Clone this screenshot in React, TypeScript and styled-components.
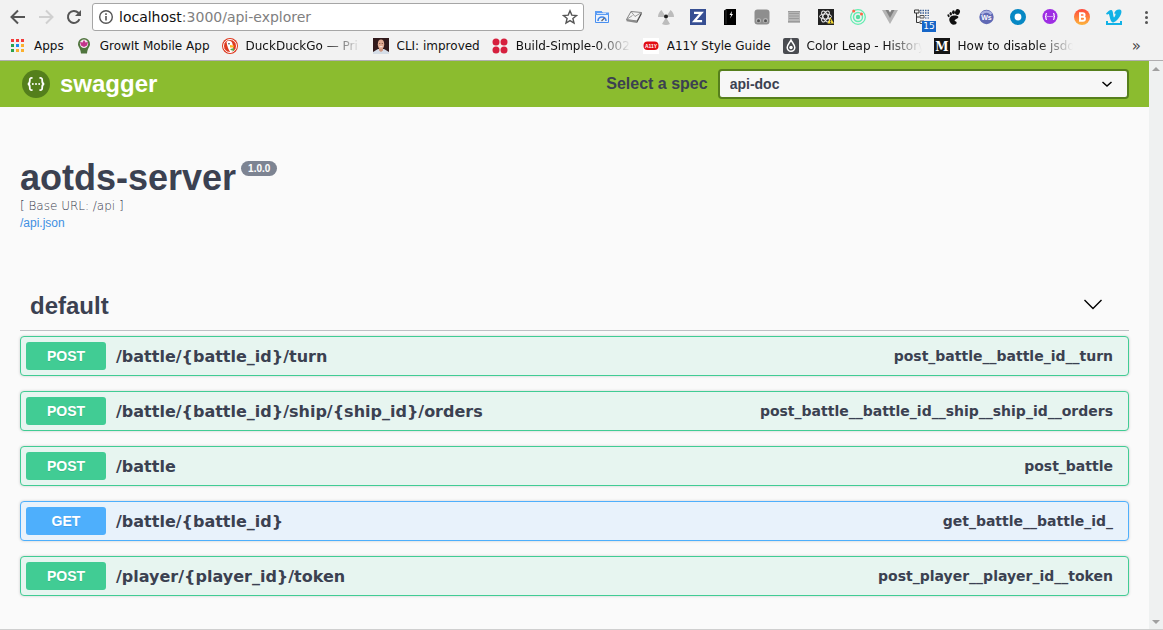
import React from 'react';
import styled, { createGlobalStyle } from 'styled-components';

const UI_FONT = '"DejaVu Sans", Verdana, sans-serif';
const HEAD_FONT = '"Liberation Sans", Arial, sans-serif';
const INK = '#3b4151';

const GlobalStyle = createGlobalStyle`
  *, *::before, *::after { box-sizing: border-box; }
  body { margin: 0; background: #fafafa; color: ${INK}; font-family: ${HEAD_FONT}; }
  button, select, input { font: inherit; color: inherit; }
  svg { display: block; flex: none; }
`;

const Shell = styled.div`
  display: flex;
  flex-direction: column;
  min-height: 100vh;
`;

/* Browser chrome */

const Chrome = styled.header`
  background: #f2f2f2;
  border-bottom: 1px solid #b0aeb0;
  font-family: ${UI_FONT};
  color: #111;
`;

const Toolbar = styled.div`
  display: flex;
  align-items: center;
  height: 34px;
  padding: 0 1px 0 4px;
`;

const NavButtons = styled.nav`
  display: flex;
  margin-right: 4px;
`;

const IconButton = styled.button<{ $width: number }>`
  position: relative;
  display: flex;
  align-items: center;
  justify-content: center;
  width: ${(p) => p.$width}px;
  height: 28px;
  padding: 0;
  border: 0;
  background: none;
`;

const Omnibox = styled.div`
  position: relative;
  display: flex;
  flex: 1;
  align-items: center;
  gap: 5px;
  min-width: 0;
  height: 28px;
  margin-right: 2px;
  padding: 0 5px;
  border: 1px solid #a6a6a6;
  border-radius: 3px;
  background: #fff;
`;

const Address = styled.a`
  flex: 1;
  overflow: hidden;
  color: #808080;
  font-size: 14px;
  line-height: 20px;
  text-decoration: none;
  white-space: nowrap;
`;

const Host = styled.span`
  color: #111;
`;

const Badge = styled.span`
  position: absolute;
  right: 2px;
  bottom: -1px;
  width: 14px;
  height: 11px;
  background: #1666c8;
  color: #fff;
  font-size: 9px;
  line-height: 11px;
  text-align: center;
`;

const Bookmarks = styled.nav`
  display: flex;
  align-items: center;
  gap: 12px;
  height: 26px;
  padding: 0 22px 2px 10px;
`;

const Bookmark = styled.a`
  display: flex;
  align-items: center;
  gap: 8px;
  color: inherit;
  font-size: 12px;
  line-height: 16px;
  text-decoration: none;
  white-space: nowrap;
`;

const BookmarkName = styled.span<{ $fade?: boolean }>`
  overflow: hidden;
  ${(p) =>
    p.$fade &&
    'width: 115px; -webkit-mask-image: linear-gradient(to right, #000 80px, transparent 115px); mask-image: linear-gradient(to right, #000 80px, transparent 115px);'}
`;

const Overflow = styled.button`
  margin-left: auto;
  padding: 0;
  border: 0;
  background: none;
  color: #444;
  font-size: 15px;
  line-height: 16px;
`;

/* Page */

const Viewport = styled.div`
  display: flex;
  flex: 1;
  border-bottom: 1px solid #cfcfcf;
`;

const Page = styled.div`
  flex: 1;
  min-width: 0;
`;

const Scrollbar = styled.div`
  display: flex;
  flex-direction: column;
  align-items: center;
  justify-content: space-between;
  width: 14px;
  padding: 6px 0 5px;
  background: #eff1f1;
`;

const TopBar = styled.div`
  display: flex;
  align-items: center;
  justify-content: space-between;
  height: 46px;
  padding: 0 20px;
  background: #8bbc2f;
`;

const Brand = styled.a`
  display: flex;
  align-items: center;
  gap: 10px;
  color: #fff;
  font-size: 24px;
  font-weight: 700;
  line-height: 28px;
  text-decoration: none;
`;

const SpecLabel = styled.label`
  position: relative;
  display: flex;
  flex: 0 1 600px;
  align-items: center;
`;

const SpecText = styled.span`
  flex: 1;
  padding-right: 10px;
  font-size: 16px;
  font-weight: 700;
  line-height: 20px;
  text-align: right;
  white-space: nowrap;
`;

const SpecSelect = styled.select`
  flex: 2;
  height: 30px;
  padding: 0 40px 0 10px;
  border: 2px solid #567f1c;
  border-radius: 4px;
  background: #f7f7f7;
  font-size: 14px;
  font-weight: 700;
  appearance: none;
`;

const SelectArrow = styled.svg`
  position: absolute;
  right: 12px;
  pointer-events: none;
`;

const Content = styled.main`
  padding: 50px 20px 33px;
`;

const TitleRow = styled.div`
  display: flex;
  align-items: flex-start;
  gap: 5px;
`;

const Title = styled.h1`
  margin: 0;
  font-size: 36px;
  line-height: 42px;
`;

const Version = styled.span`
  margin-top: 4px;
  padding: 0 7px;
  border-radius: 8px;
  background: #7d8492;
  color: #fff;
  font-size: 10px;
  font-weight: 700;
  line-height: 15px;
`;

const BaseUrl = styled.div`
  color: ${INK};
  font-family: "DejaVu Sans Light", ${UI_FONT};
  font-size: 12px;
  font-weight: 300;
  line-height: 15px;
`;

const SpecLink = styled.a`
  display: block;
  width: max-content;
  margin: 2px 0 50px;
  color: #3f8fe2;
  font-size: 12px;
  line-height: 14px;
  text-decoration: none;
`;

const SectionHead = styled.h2`
  display: flex;
  align-items: center;
  justify-content: space-between;
  height: 51px;
  margin: 0 0 5px;
  padding: 2px 20px 0 10px;
  border-bottom: 1px solid #bfc0c4;
  font-size: 24px;
`;

const Operations = styled.ul`
  display: flex;
  flex-direction: column;
  gap: 15px;
  margin: 0;
  padding: 0;
  list-style: none;
`;

type Verb = 'POST' | 'GET';
const verbColor: Record<Verb, string> = { POST: '#41cc94', GET: '#4eaffc' };
const verbFill: Record<Verb, string> = { POST: '#e7f5f0', GET: '#e8f2fb' };

const Operation = styled.button<{ $verb: Verb }>`
  display: flex;
  align-items: center;
  width: 100%;
  height: 40px;
  padding: 0 15px 0 5px;
  border: 1px solid ${(p) => verbColor[p.$verb]};
  border-radius: 4px;
  background: ${(p) => verbFill[p.$verb]};
  box-shadow: 0 0 3px rgba(0, 0, 0, 0.19);
  font-family: ${UI_FONT};
  font-weight: 700;
`;

const Method = styled.span<{ $verb: Verb }>`
  width: 80px;
  border-radius: 3px;
  background: ${(p) => verbColor[p.$verb]};
  color: #fff;
  font-family: ${HEAD_FONT};
  font-size: 14px;
  line-height: 28px;
  text-align: center;
  text-shadow: 0 1px 0 rgba(0, 0, 0, 0.1);
`;

const Path = styled.span`
  flex: 1;
  padding: 0 10px;
  font-size: 16px;
  text-align: left;
`;

const OperationId = styled.span`
  font-size: 14px;
`;

const Svg = ({ children, size = 16, box = 16 }: { children: React.ReactNode; size?: number; box?: number }) => (
  <svg width={size} height={size} viewBox={`0 0 ${box} ${box}`} fill="none" aria-hidden="true">
    {children}
  </svg>
);

const extensions: { name: string; badge?: string; icon: React.ReactNode }[] = [
  {
    name: 'Page speed',
    icon: (
      <Svg>
        <path d="M1.500 2.500h6l1 2h6v9h-13z" fill="#eaf2fd" stroke="#4a90f0" />
        <path d="M1 2h6.500l1 1.500H15V6H1z" fill="#5b9cf3" />
        <path d="M3 4.500h9" stroke="#cfe1fb" />
        <path d="M4 12a4 4 0 0 1 8 0" stroke="#3f86ea" strokeWidth="1.600" />
        <path d="M7.500 12l3-3" stroke="#666" strokeWidth="1.300" />
      </Svg>
    ),
  },
  {
    name: 'Notes',
    icon: (
      <Svg>
        <path d="M5 2.500l10.500 1-4.500 8.500-10.500-1.500z" fill="#f4f4f4" stroke="#777" strokeWidth=".9" />
        <path d="M.5 10.500L11 12v2L.5 12.300z" fill="#8a8a8a" />
        <path d="M11 12l4.500-8.500v2L11 14z" fill="#444" />
        <path d="M5 2.500l4 5 6.500-4M.5 10.500l6-4" stroke="#8f8f8f" strokeWidth=".9" />
      </Svg>
    ),
  },
  {
    name: 'Ghost',
    icon: (
      <Svg>
        <path d="M3.500 1L7 6.500 6 8H0C0 5 1.500 2.500 3.500 1zM12.500 1L9 6.500l1 1.500h6c0-3-1.500-5.500-3.500-7zM7 10h2l3 5c-2.500 1.300-5.500 1.300-8 0z" fill="#bcbcbc" />
        <circle cx="8" cy="7.500" r="2" fill="#222" />
      </Svg>
    ),
  },
  {
    name: 'Zotero',
    icon: (
      <Svg>
        <path d="M0 0h16v16H0z" fill="#374f93" />
        <path d="M4 3.800h7.500L4.300 12.200h7.800" stroke="#fff" strokeWidth="2.200" />
      </Svg>
    ),
  },
  {
    name: 'Spark',
    icon: (
      <Svg>
        <path d="M2 1.500L4.500 0H14v16H2z" fill="#000" />
        <path d="M4 1v14" stroke="#555" strokeWidth=".6" />
        <path d="M10 2L7.500 6h1.700L8 9.500 11 5H9.500z" fill="#fff" />
      </Svg>
    ),
  },
  {
    name: 'Tampermonkey',
    icon: (
      <Svg>
        <rect x=".5" y=".5" width="15" height="15" rx="3" fill="#8e8e8e" />
        <circle cx="4.500" cy="11.500" r="2.500" fill="#b4b4b4" />
        <circle cx="11.500" cy="11.500" r="2.500" fill="#b4b4b4" />
        <circle cx="4.500" cy="11.800" r="1.500" fill="#555" />
        <circle cx="11.500" cy="11.800" r="1.500" fill="#555" />
      </Svg>
    ),
  },
  {
    name: 'Reader',
    icon: (
      <Svg>
        <path d="M2 2h12v12H2z" fill="#b8b8b8" />
        <path d="M2 2.500h12M3 4.500h10M3 7h10M3 9.500h10M2 12.500h12" stroke="#979797" strokeWidth=".9" />
      </Svg>
    ),
  },
  {
    name: 'React tools',
    icon: (
      <Svg>
        <path d="M0 0h16v16H0z" fill="#222" />
        <g stroke="#eee">
          <ellipse cx="7.500" cy="7.500" rx="6" ry="2.500" />
          <ellipse cx="7.500" cy="7.500" rx="6" ry="2.500" transform="rotate(60 7.500 7.500)" />
          <ellipse cx="7.500" cy="7.500" rx="6" ry="2.500" transform="rotate(120 7.500 7.500)" />
        </g>
        <path d="M12.500 8.500l3.500 6H9.500z" fill="#f8dc35" />
        <path d="M12.600 10.500v2M12.600 13v1" stroke="#333" />
      </Svg>
    ),
  },
  {
    name: 'Radar',
    icon: (
      <Svg>
        <g stroke="#63edb1">
          <circle cx="8" cy="8" r="7.300" strokeWidth="1.300" />
          <circle cx="8" cy="8" r="4.500" strokeWidth="1.500" />
        </g>
        <circle cx="8" cy="8" r="2.200" fill="#56dca0" />
        <circle cx="3.700" cy="2" r="1.500" fill="#ff6548" />
        <circle cx="11.500" cy="5" r="1.500" fill="#ff6548" />
      </Svg>
    ),
  },
  {
    name: 'Vue tools',
    icon: (
      <Svg>
        <path d="M0 1h4l4 7 4-7h4L8 15z" fill="#b5b5b5" />
        <path d="M3.500 1H6.500L8 3.500 9.500 1h3L8 9z" fill="#808080" />
      </Svg>
    ),
  },
  {
    name: 'Outline',
    badge: '15',
    icon: (
      <Svg>
        <path d="M.5 1h4.500v3H.5zM2.500 4v9.500h3M2.500 8h3" stroke="#333" />
        <path d="M6 1.500h10M6 4h10" stroke="#3a5f96" strokeWidth="1.500" strokeDasharray="1.500 1" />
        <path d="M6 6.500h4v2.500H6zM6 12h4v2.500H6z" stroke="#555" />
        <path d="M11 6.500h5M11 9h5" stroke="#3a5f96" strokeWidth="1.200" strokeDasharray="1.500 1" />
      </Svg>
    ),
  },
  {
    name: 'Gnome',
    icon: (
      <Svg>
        <g fill="#111">
          <ellipse cx="11.500" cy="3" rx="2.400" ry="3" transform="rotate(20 11.500 3)" />
          <ellipse cx="7.500" cy="3.200" rx="1.400" ry="2" />
          <ellipse cx="4.700" cy="4.800" rx="1.200" ry="1.700" transform="rotate(-15 4.700 4.800)" />
          <ellipse cx="2.500" cy="6.700" rx="1" ry="1.500" transform="rotate(-25 2.500 6.700)" />
          <path d="M11.500 7c-4-1.300-8.700.5-8.200 4.200C3.800 14.300 6.500 16.200 9 15.500c2.300-.6 2-3 .4-3.300-1.200-.2-1-1.200.4-1.900 2-.7 3.700-2.500 1.700-3.300z" />
        </g>
      </Svg>
    ),
  },
  {
    name: 'Web scraper',
    icon: (
      <Svg>
        <circle cx="8.500" cy="8" r="7.200" fill="#6069b5" />
        <path d="M3.500 5c3-3 7-3 10 0" stroke="#a9afe0" strokeWidth="2.500" />
        <text x="8.500" y="11" fill="#fff" fontFamily="Liberation Sans, sans-serif" fontSize="7" fontWeight="700" textAnchor="middle">
          Ws
        </text>
      </Svg>
    ),
  },
  {
    name: 'Ring',
    icon: (
      <Svg>
        <circle cx="8" cy="8" r="5.700" fill="#fff" stroke="#0788c4" strokeWidth="4.600" />
      </Svg>
    ),
  },
  {
    name: 'Swagger helper',
    icon: (
      <Svg>
        <circle cx="8" cy="7.500" r="7.500" fill="#9e2ee3" />
        <path d="M5 4.500c-1.500 0-1 1-1 2s-.5 1-1 1c.5 0 1 0 1 1s-.5 2 1 2M11 4.500c1.500 0 1 1 1 2s.5 1 1 1c-.5 0-1 0-1 1s.5 2-1 2M5.500 7.500h1M7.500 7.500h1M9.500 7.500h1" stroke="#fff" strokeWidth="1.200" />
      </Svg>
    ),
  },
  {
    name: 'Bitly',
    icon: (
      <Svg>
        <defs>
          <linearGradient id="warm" x1="0" y1="0" x2="0" y2="1">
            <stop stopColor="#ff493c" />
            <stop offset="1" stopColor="#fdb43c" />
          </linearGradient>
        </defs>
        <circle cx="8" cy="8" r="8" fill="url(#warm)" />
        <path d="M6 4.200h2.800a1.800 1.800 0 0 1 0 3.600H6zM6 7.800h3a2 2 0 0 1 0 4H6z" stroke="#fff" strokeWidth="1.900" />
      </Svg>
    ),
  },
  {
    name: 'Vimeo',
    icon: (
      <Svg>
        <path d="M0 4.500C2 2.500 4 .5 5.500 1 7.500 1.500 6.800 7 8 8.500c1.500-2 2-3.500 1-4-1-.3-1 .2-1 .2C9 1 12-.2 14.500.7c2 1.300.5 5-1 7.300-2 3-5 5.500-6.500 5.500C4.500 13.500 4 8 3 5.500c-.5-1-1 0-2 .3z" fill="#12b2e6" />
        <path d="M1 12v3h14v-3" stroke="#12b2e6" strokeWidth="2" />
      </Svg>
    ),
  },
];

const bookmarks: { name: string; fade?: boolean; icon: React.ReactNode }[] = [
  {
    name: 'Apps',
    icon: (
      <Svg>
        <path d="M1 1h3v3H1zM6 1h3v3H6zM11 1h3v3h-3z" fill="#f33b3b" />
        <path d="M1 6h3v3H1zM1 11h3v3H1z" fill="#2ba24c" />
        <path d="M6 6h3v3H6z" fill="#1b8cf0" />
        <path d="M11 6h3v3h-3zM6 11h3v3H6zM11 11h3v3h-3z" fill="#fbb02d" />
      </Svg>
    ),
  },
  {
    name: 'GrowIt Mobile App',
    icon: (
      <Svg>
        <path d="M8 0a6 6 0 0 1 6 6c0 3-2.500 4-3 9.500H5C4.500 10 2 9 2 6a6 6 0 0 1 6-6z" fill="#50753e" />
        <circle cx="8" cy="5.800" r="4.200" fill="#f4e4ee" />
        <path d="M8 2l1.500 2.500L12 4l-1 3.500L8 9 5 7.500 4 4l2.500.5z" fill="#c2338a" />
      </Svg>
    ),
  },
  {
    name: 'DuckDuckGo — Pri',
    fade: true,
    icon: (
      <Svg>
        <circle cx="8" cy="8" r="8" fill="#de3a20" />
        <circle cx="8" cy="8" r="6.500" stroke="#fff" />
        <path d="M4.500 4C6 2 10 2.500 10.500 6l.5 2 .5 5-3 1.500C6.500 12 5 8 4.500 4z" fill="#fff" />
        <path d="M8 7l4.500 .8-1.500 1.700H8z" fill="#fbb520" />
        <path d="M8.500 11l3.500-1v3l-3.500-1z" fill="#53a94d" />
        <circle cx="7" cy="5.700" r=".8" fill="#234" />
      </Svg>
    ),
  },
  {
    name: 'CLI: improved',
    icon: (
      <Svg>
        <path d="M0 0h16v16H0z" fill="#321a1c" />
        <path d="M0 16v-2l5-3h6l5 3v2z" fill="#d5dde7" />
        <path d="M6 10h4v2.500L8 14l-2-1.500z" fill="#cf957d" />
        <ellipse cx="8" cy="6.200" rx="3.200" ry="4.800" fill="#e0aa92" />
        <path d="M6.500 8.700h3" stroke="#fff" strokeWidth=".8" />
        <path d="M6 5.500h1.300M8.700 5.500H10" stroke="#6d4238" strokeWidth=".7" />
      </Svg>
    ),
  },
  {
    name: 'Build-Simple-0.002',
    fade: true,
    icon: (
      <Svg>
        <g fill="#d6203e">
          <circle cx="4" cy="4" r="3.500" />
          <circle cx="12" cy="4" r="3.500" />
          <circle cx="4" cy="12" r="3.500" />
          <circle cx="12" cy="12" r="3.500" />
        </g>
      </Svg>
    ),
  },
  {
    name: 'A11Y Style Guide',
    icon: (
      <Svg>
        <path d="M0 0h16v16H0z" fill="#fff" />
        <rect x=".5" y="3.500" width="15" height="8.500" rx="4" fill="#e20d14" />
        <text x="8" y="10" fill="#fff" fontFamily="Liberation Sans, sans-serif" fontSize="5" fontWeight="700" textAnchor="middle">
          A11Y
        </text>
      </Svg>
    ),
  },
  {
    name: 'Color Leap - History',
    fade: true,
    icon: (
      <Svg>
        <rect width="16" height="16" rx="2" fill="#494b50" />
        <path d="M8 2c1 2.500 3.800 4.500 3.800 7.500a3.800 3.800 0 0 1-7.600 0C4.200 6.500 7 4.500 8 2z" stroke="#fff" strokeWidth="1.500" />
        <circle cx="8" cy="9.500" r="1.700" fill="#fff" />
      </Svg>
    ),
  },
  {
    name: 'How to disable jsdo',
    fade: true,
    icon: (
      <Svg>
        <path d="M0 0h16v16H0z" fill="#151515" />
        <text x="8" y="12.500" fill="#fff" fontFamily="DejaVu Serif, serif" fontSize="12" fontWeight="700" textAnchor="middle">
          M
        </text>
      </Svg>
    ),
  },
];

const operations: { verb: Verb; path: string; id: string }[] = [
  { verb: 'POST', path: '/battle/{battle_id}/turn', id: 'post_battle__battle_id__turn' },
  { verb: 'POST', path: '/battle/{battle_id}/ship/{ship_id}/orders', id: 'post_battle__battle_id__ship__ship_id__orders' },
  { verb: 'POST', path: '/battle', id: 'post_battle' },
  { verb: 'GET', path: '/battle/{battle_id}', id: 'get_battle__battle_id_' },
  { verb: 'POST', path: '/player/{player_id}/token', id: 'post_player__player_id__token' },
];

export default function App() {
  return (
    <Shell>
      <GlobalStyle />
      <Chrome>
        <Toolbar>
          <NavButtons aria-label="History">
            <IconButton $width={28} aria-label="Back">
              <Svg>
                <path d="M15 8H2M8 1.500L1.500 8 8 14.500" stroke="#555" strokeWidth="2" />
              </Svg>
            </IconButton>
            <IconButton $width={28} aria-label="Forward">
              <Svg>
                <path d="M1 8h13M8 1.500L14.500 8 8 14.500" stroke="#d0d0d0" strokeWidth="2" />
              </Svg>
            </IconButton>
            <IconButton $width={28} aria-label="Reload">
              <Svg>
                <path d="M13.500 10.200A6 6 0 1 1 12.300 3.800L13.500 5" stroke="#555" strokeWidth="2" />
                <path d="M15 1v6H9z" fill="#555" />
              </Svg>
            </IconButton>
          </NavButtons>
          <Omnibox>
            <Svg>
              <circle cx="8" cy="8" r="6.300" stroke="#555" strokeWidth="1.400" />
              <path d="M8 7v4.500M8 4.300v1.700" stroke="#555" strokeWidth="1.600" />
            </Svg>
            <Address href="#">
              <Host>localhost</Host>:3000/api-explorer
            </Address>
            <Svg>
              <path d="M8 1.800l1.800 4.300 4.700.4-3.600 3 1.100 4.600L8 11.600l-4 2.500 1.100-4.600-3.600-3 4.700-.4z" stroke="#555" strokeWidth="1.400" />
            </Svg>
          </Omnibox>
          {extensions.map((e) => (
            <IconButton key={e.name} $width={32} aria-label={e.name}>
              {e.icon}
              {e.badge && <Badge>{e.badge}</Badge>}
            </IconButton>
          ))}
          <IconButton $width={32} aria-label="Menu">
            <Svg>
              <g fill="#555">
                <circle cx="8.500" cy="3.500" r="1.500" />
                <circle cx="8.500" cy="8.500" r="1.500" />
                <circle cx="8.500" cy="13.500" r="1.500" />
              </g>
            </Svg>
          </IconButton>
        </Toolbar>
        <Bookmarks aria-label="Bookmarks">
          {bookmarks.map((b) => (
            <Bookmark key={b.name} href="#">
              {b.icon}
              <BookmarkName $fade={b.fade}>{b.name}</BookmarkName>
            </Bookmark>
          ))}
          <Overflow aria-label="More bookmarks">»</Overflow>
        </Bookmarks>
      </Chrome>
      <Viewport>
        <Page>
          <TopBar>
            <Brand href="#">
              <Svg size={30} box={30}>
                <circle cx="16" cy="15" r="14" fill="#547f1c" />
                <path
                  d="M12.500 9c-2.500-.2-2.800.8-2.700 2.500.1 2 .1 3.300-2 3.500 2.100.2 2.100 1.500 2 3.500-.1 1.700.2 2.700 2.700 2.500M19.500 9c2.500-.2 2.800.8 2.700 2.500-.1 2-.1 3.300 2 3.500-2.100.2-2.100 1.500-2 3.500.1 1.700-.2 2.700-2.700 2.500"
                  stroke="#fff"
                  strokeWidth="1.800"
                />
                <circle cx="12.800" cy="15" r="1" fill="#fff" />
                <circle cx="16" cy="15" r="1" fill="#fff" />
                <circle cx="19.200" cy="15" r="1" fill="#fff" />
              </Svg>
              swagger
            </Brand>
            <SpecLabel htmlFor="spec">
              <SpecText>Select a spec</SpecText>
              <SpecSelect id="spec" defaultValue="api-doc">
                <option value="api-doc">api-doc</option>
              </SpecSelect>
              <SelectArrow width="20" height="20" viewBox="0 0 20 20" fill="none" aria-hidden="true">
                <path d="M5.500 8l4.500 4 4.500-4" stroke="#000" strokeWidth="1.500" />
              </SelectArrow>
            </SpecLabel>
          </TopBar>
          <Content>
            <TitleRow>
              <Title>aotds-server</Title>
              <Version>1.0.0</Version>
            </TitleRow>
            <BaseUrl>[ Base URL: /api ]</BaseUrl>
            <SpecLink href="#">/api.json</SpecLink>
            <SectionHead>
              default
              <IconButton $width={32} aria-label="Collapse default" aria-expanded="true">
                <Svg size={20} box={20}>
                  <path d="M1.500 4l8.500 8.500L18.500 4" stroke="#000" strokeWidth="1.400" />
                </Svg>
              </IconButton>
            </SectionHead>
            <Operations>
              {operations.map((o) => (
                <li key={o.id}>
                  <Operation $verb={o.verb}>
                    <Method $verb={o.verb}>{o.verb}</Method>
                    <Path>{o.path}</Path>
                    <OperationId>{o.id}</OperationId>
                  </Operation>
                </li>
              ))}
            </Operations>
          </Content>
        </Page>
        <Scrollbar aria-hidden="true">
          <svg width="8" height="4" viewBox="0 0 8 4">
            <path d="M4 0l4 4H0z" fill="#a0a0a0" />
          </svg>
          <svg width="8" height="4" viewBox="0 0 8 4">
            <path d="M0 0h8L4 4z" fill="#a0a0a0" />
          </svg>
        </Scrollbar>
      </Viewport>
    </Shell>
  );
}
